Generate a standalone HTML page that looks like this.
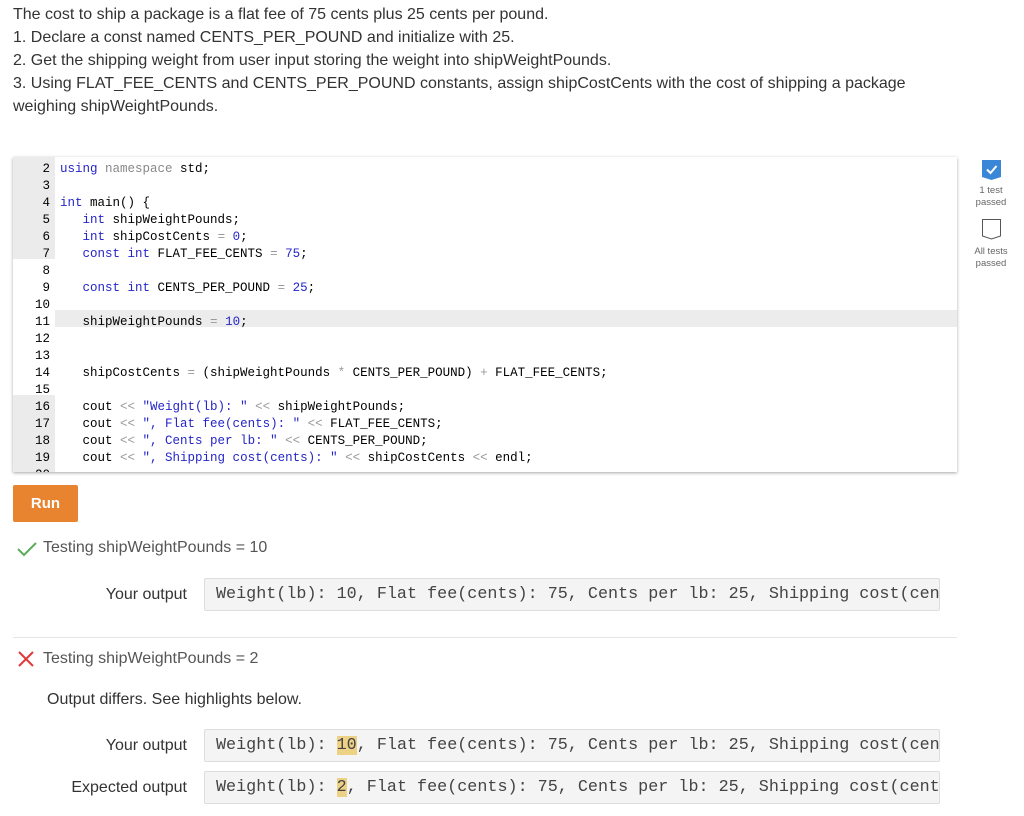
<!DOCTYPE html>
<html><head><meta charset="utf-8"><style>
body{margin:0;background:#fff;width:1024px;height:816px;overflow:hidden;font-family:"Liberation Sans",sans-serif;color:#333;position:relative}
.p{position:absolute;left:13px;top:3px;font-size:16px;line-height:23px;color:#333}
.code{position:absolute;left:13px;top:157px;width:944px;height:315px;box-shadow:0 1px 3px rgba(0,0,0,.35);overflow:hidden;background:#fff}
.row{position:absolute;left:0;right:0;height:17px;font-family:"Liberation Mono",monospace;font-size:12.5px;line-height:17px;white-space:pre;color:#000}
.row .n{display:inline-block;width:37px;text-align:right;padding-right:10px}
.k{color:#2525c8}.s{color:#2525c8}.o{color:#999}.gr{color:#888}
.run{position:absolute;left:13px;top:485px;width:65px;height:37px;background:#e8842f;color:#fff;font-weight:bold;font-size:15px;text-align:center;line-height:37px;border-radius:2px}
.t{position:absolute;font-size:16px;color:#555}
.lab{position:absolute;font-size:16px;color:#333;text-align:right;width:187px;left:0}
.box{position:absolute;left:204px;width:736px;height:33px;background:#f4f4f4;border:1px solid #ddd;border-radius:2px;font-family:"Liberation Mono",monospace;font-size:16.75px;line-height:31px;color:#444;white-space:pre;overflow:hidden;padding-left:11px;box-sizing:border-box}
.hl{background:#edd185}
.side{position:absolute;font-size:9.5px;color:#666;text-align:center;width:60px;left:961px;line-height:12px}
</style></head><body>
<div class="p">The cost to ship a package is a flat fee of 75 cents plus 25 cents per pound.<br>1. Declare a const named CENTS_PER_POUND and initialize with 25.<br>2. Get the shipping weight from user input storing the weight into shipWeightPounds.<br>3. Using FLAT_FEE_CENTS and CENTS_PER_POUND constants, assign shipCostCents with the cost of shipping a package<br>weighing shipWeightPounds.</div>

<div class="code">
<div style="position:absolute;left:0;top:0;width:42px;height:102px;background:#ebebeb"></div>
<div style="position:absolute;left:0;top:238px;width:42px;height:80px;background:#ebebeb"></div>
<div style="position:absolute;left:42px;top:153px;right:0;height:17px;background:#ececec"></div>
<div class="row" style="top:4px"><span class="n">2</span><span class="k">using</span> <span class="gr">namespace</span> std;</div>
<div class="row" style="top:21px"><span class="n">3</span></div>
<div class="row" style="top:38px"><span class="n">4</span><span class="k">int</span> main() {</div>
<div class="row" style="top:55px"><span class="n">5</span>   <span class="k">int</span> shipWeightPounds;</div>
<div class="row" style="top:72px"><span class="n">6</span>   <span class="k">int</span> shipCostCents <span class="o">=</span> <span class="k">0</span>;</div>
<div class="row" style="top:89px"><span class="n">7</span>   <span class="k">const int</span> FLAT_FEE_CENTS <span class="o">=</span> <span class="k">75</span>;</div>
<div class="row" style="top:106px"><span class="n">8</span></div>
<div class="row" style="top:123px"><span class="n">9</span>   <span class="k">const int</span> CENTS_PER_POUND <span class="o">=</span> <span class="k">25</span>;</div>
<div class="row" style="top:140px"><span class="n">10</span></div>
<div class="row" style="top:157px"><span class="n">11</span>   shipWeightPounds <span class="o">=</span> <span class="k">10</span>;</div>
<div class="row" style="top:174px"><span class="n">12</span></div>
<div class="row" style="top:191px"><span class="n">13</span></div>
<div class="row" style="top:208px"><span class="n">14</span>   shipCostCents <span class="o">=</span> (shipWeightPounds <span class="o">*</span> CENTS_PER_POUND) <span class="o">+</span> FLAT_FEE_CENTS;</div>
<div class="row" style="top:225px"><span class="n">15</span></div>
<div class="row" style="top:242px"><span class="n">16</span>   cout <span class="o">&lt;&lt;</span> <span class="s">"Weight(lb): "</span> <span class="o">&lt;&lt;</span> shipWeightPounds;</div>
<div class="row" style="top:259px"><span class="n">17</span>   cout <span class="o">&lt;&lt;</span> <span class="s">", Flat fee(cents): "</span> <span class="o">&lt;&lt;</span> FLAT_FEE_CENTS;</div>
<div class="row" style="top:276px"><span class="n">18</span>   cout <span class="o">&lt;&lt;</span> <span class="s">", Cents per lb: "</span> <span class="o">&lt;&lt;</span> CENTS_PER_POUND;</div>
<div class="row" style="top:293px"><span class="n">19</span>   cout <span class="o">&lt;&lt;</span> <span class="s">", Shipping cost(cents): "</span> <span class="o">&lt;&lt;</span> shipCostCents <span class="o">&lt;&lt;</span> endl;</div>
<div class="row" style="top:310px"><span class="n">20</span></div>
</div>

<svg style="position:absolute;left:982px;top:160px" width="19" height="20"><path d="M0 0H19V17L9.5 20L0 17Z" fill="#3a87d8"/><path d="M5 9.5L8.5 13L14.5 6" stroke="#fff" stroke-width="2" fill="none"/></svg>
<div class="side" style="top:185px">1 test<br>passed</div>
<svg style="position:absolute;left:982px;top:219px" width="19" height="21"><path d="M.5 .5H18.5V17L9.5 20L.5 17Z" fill="none" stroke="#555"/></svg>
<div class="side" style="top:246px">All tests<br>passed</div>

<div class="run">Run</div>
<svg style="position:absolute;left:17px;top:541px" width="20" height="16"><path d="M1 8L7 14L19 2" stroke="#5cab5c" stroke-width="2" fill="none"/></svg>
<div class="t" style="left:43px;top:539px">Testing shipWeightPounds = 10</div>
<div class="lab" style="top:586px">Your output</div>
<div class="box" style="top:578px">Weight(lb): 10, Flat fee(cents): 75, Cents per lb: 25, Shipping cost(cents): 325</div>
<div style="position:absolute;left:13px;top:637px;width:944px;height:1px;background:#e6e6e6"></div>
<svg style="position:absolute;left:18px;top:651px" width="16" height="16"><path d="M1 1L15 15M15 1L1 15" stroke="#e0393a" stroke-width="2"/></svg>
<div class="t" style="left:43px;top:650px">Testing shipWeightPounds = 2</div>
<div class="t" style="left:47px;top:691px;color:#333">Output differs. See highlights below.</div>
<div class="lab" style="top:737px">Your output</div>
<div class="box" style="top:729px">Weight(lb): <span class="hl">10</span>, Flat fee(cents): 75, Cents per lb: 25, Shipping cost(cents): 325</div>
<div class="lab" style="top:779px">Expected output</div>
<div class="box" style="top:771px">Weight(lb): <span class="hl">2</span>, Flat fee(cents): 75, Cents per lb: 25, Shipping cost(cents): 125</div>
</body></html>
